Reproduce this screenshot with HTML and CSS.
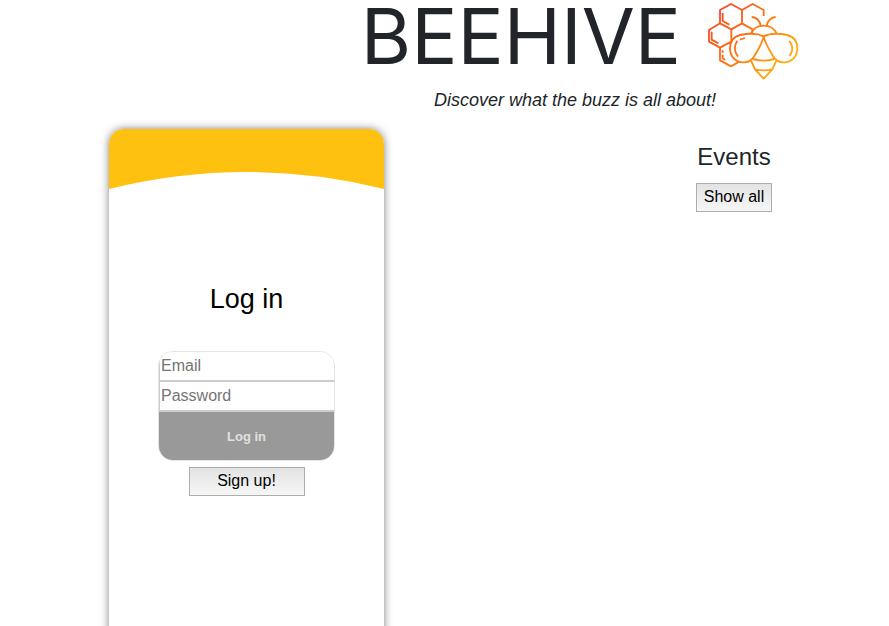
FILE: index.html
```html
<!DOCTYPE html>
<html lang="en">
<head>
<meta charset="utf-8">
<title>Beehive</title>
<link rel="stylesheet" href="styles.css">
</head>
<body>
<header class="masthead">
  <div class="brand">
    <h1 class="brand-name">BEEHIVE</h1>
    <svg class="brand-logo" viewBox="24 6 276 234" aria-hidden="true">
      <defs>
        <linearGradient id="honey" gradientUnits="userSpaceOnUse" x1="40" y1="40" x2="250" y2="210">
          <stop offset="0" stop-color="#fa4528"/>
          <stop offset="0.5" stop-color="#fb7a16"/>
          <stop offset="1" stop-color="#ffb010"/>
        </linearGradient>
      </defs>
      <g fill="none" stroke="url(#honey)" stroke-width="5.5" stroke-linejoin="round">
        <path d="M96 12 129 30V70L97 88 63 70V30ZM63 70 30 90V125L63 143 97 125V88M129 30 161 12 194 30V48M129 70 162 89 158 102M63 143V181L96 199 121 185M97 125 93 133"/>
        <path d="M71 39V63L91 74M38 95V119L58 130M71 151V158M71 164V175L79 180"/>
        <path d="M158 51Q180 53 185 77M230 51Q209 53 203 77M156 101Q166 77 194 77 222 77 233 101"/>
        <path d="M194 109C174 99 143 101 123 105 103 110 93 126 93 145 93 169 109 186 130 187 148 188 159 180 166 168 176 151 189 132 194 109ZM194 109C214 99 245 101 265 105 285 110 295 126 295 145 295 169 279 186 258 187 240 188 229 180 222 168 212 151 199 132 194 109Z"/>
        <path d="M161 177Q194 187 227 177M156 182 168 208 194 236 220 208 232 182M168 208Q194 214 220 208"/>
        <path d="M138 114 123 119M115 122Q99 147 117 170M271 122Q289 147 271 168"/>
      </g>
    </svg>
  </div>
  <p class="tagline">Discover what the buzz is all about!</p>
</header>
<main class="content">
  <section class="card">
    <svg class="card-banner" viewBox="0 0 275 60" preserveAspectRatio="none" aria-hidden="true">
      <path fill="#ffc110" d="M0 0H275V60Q137.5 26 0 60Z"/>
    </svg>
    <h2 class="card-title">Log in</h2>
    <form class="login">
      <div class="login-fields">
        <input class="field" type="email" placeholder="Email" aria-label="Email">
        <input class="field" type="password" placeholder="Password" aria-label="Password">
        <button class="submit" type="submit">Log in</button>
      </div>
      <button class="button signup" type="button">Sign up!</button>
    </form>
  </section>
  <section class="events">
    <h2 class="events-title">Events</h2>
    <button class="button" type="button">Show all</button>
  </section>
</main>
</body>
</html>
```
FILE: styles.css
```css
* {
  box-sizing: border-box;
}

body {
  margin: 0;
  min-height: 100vh;
  display: flex;
  flex-direction: column;
  background: #fff;
  color: #212529;
  font: 16px/24px "Liberation Sans", Arial, sans-serif;
}

h1,
h2,
p {
  margin: 0;
  font-weight: 400;
}

.masthead {
  padding-left: 261px;
  text-align: center;
}

.brand {
  display: flex;
  justify-content: center;
  gap: 16px;
  height: 88px;
}

.brand-name {
  min-width: 340px;
  font: 400 77px/72px Inter, "Liberation Sans", sans-serif;
}

.brand-logo {
  width: 92px;
  height: 78px;
  margin-top: 2px;
}

.tagline {
  font-size: 18px;
  font-style: italic;
}

.content {
  flex: 1;
  display: grid;
  grid-template-columns: 275px 1fr;
  padding: 17px 0 0 109px;
}

.card {
  min-height: 560px;
  border-radius: 15px 15px 0 0;
  background: #fff;
  box-shadow: 0 0 8px rgba(0, 0, 0, 0.5);
  color: #000;
  text-align: center;
  overflow: hidden;
}

.card-banner {
  display: block;
  width: 100%;
  height: 60px;
}

.card-title {
  margin-top: 92px;
  font-size: 27px;
  line-height: 36px;
}

.login {
  display: flex;
  flex-direction: column;
  align-items: center;
  gap: 6px;
  margin-top: 34px;
}

.login-fields {
  display: flex;
  flex-direction: column;
  width: 177px;
  border: 1px solid #e4e4e4;
  border-radius: 15px;
  overflow: hidden;
}

.field {
  height: 30px;
  padding: 0 1px;
  border: 0;
  border-bottom: 2px solid #ccc;
  border-left: 1px solid #ccc;
  font: 16px "Liberation Sans", Arial, sans-serif;
}

.field::placeholder {
  color: #757575;
}

.submit {
  height: 48px;
  border: 0;
  background: #999;
  color: #e0e0e0;
  font: 700 13px "Liberation Sans", Arial, sans-serif;
}

.button {
  height: 29px;
  padding: 0 7px 2px;
  border: 1px solid #adadad;
  background: linear-gradient(#e3e3e3, #f6f6f6);
  color: #000;
  font: 16px "Liberation Sans", Arial, sans-serif;
}

.signup {
  width: 116px;
}

.events {
  padding: 13px 0 0 195px;
  text-align: center;
}

.events-title {
  margin-bottom: 12px;
  font-size: 24px;
  line-height: 29px;
}
```
